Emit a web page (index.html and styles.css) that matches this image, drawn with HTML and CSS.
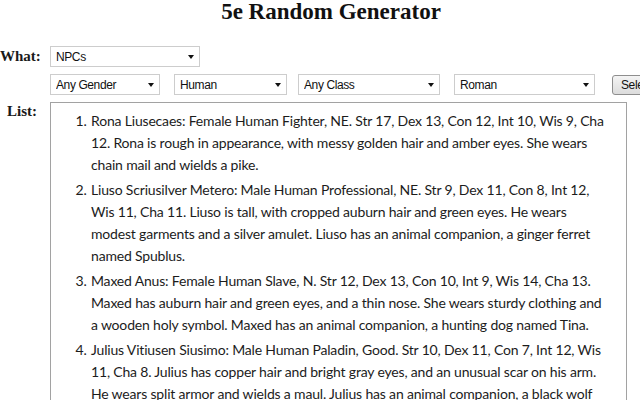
FILE: index.html
```html
<!DOCTYPE html>
<html lang="en">
<head>
    <meta charset="UTF-8">
    <title>5e Random Generator</title>
    <link rel="stylesheet" href="styles.css">
</head>
<body>
    <div class="page">
        <h1>5e Random Generator</h1>

        <div class="form">
            <label class="field-label">What:</label>
            <div class="row">
                <div class="select-wrap wide">
                    <select id="what">
                        <option>NPCs</option>
                        <option>Taverns</option>
                        <option>Treasure</option>
                    </select>
                </div>
            </div>

            <span></span>
            <div class="row options">
                <div class="select-wrap gender">
                    <select id="gender">
                        <option>Any Gender</option>
                        <option>Female</option>
                        <option>Male</option>
                    </select>
                </div>
                <div class="select-wrap race">
                    <select id="race">
                        <option>Human</option>
                        <option>Elf</option>
                        <option>Dwarf</option>
                    </select>
                </div>
                <div class="select-wrap cls">
                    <select id="class">
                        <option>Any Class</option>
                        <option>Fighter</option>
                        <option>Paladin</option>
                    </select>
                </div>
                <div class="select-wrap names">
                    <select id="names">
                        <option>Roman</option>
                        <option>Celtic</option>
                        <option>Norse</option>
                    </select>
                </div>
                <button class="btn">Select</button>
            </div>

            <label class="field-label list-label">List:</label>
            <div class="list-box">
                <ol class="results">
                    <li>Rona Liusecaes: Female Human Fighter, NE. Str 17, Dex 13, Con 12, Int 10, Wis 9, Cha 12. Rona is rough in appearance, with messy golden hair and amber eyes. She wears chain mail and wields a pike.</li>
                    <li>Liuso Scriusilver Metero: Male Human Professional, NE. Str 9, Dex 11, Con 8, Int 12, Wis 11, Cha 11. Liuso is tall, with cropped auburn hair and green eyes. He wears modest garments and a silver amulet. Liuso has an animal companion, a ginger ferret named Spublus.</li>
                    <li>Maxed Anus: Female Human Slave, N. Str 12, Dex 13, Con 10, Int 9, Wis 14, Cha 13. Maxed has auburn hair and green eyes, and a thin nose. She wears sturdy clothing and a wooden holy symbol. Maxed has an animal companion, a hunting dog named Tina.</li>
                    <li>Julius Vitiusen Siusimo: Male Human Paladin, Good. Str 10, Dex 11, Con 7, Int 12, Wis 11, Cha 8. Julius has copper hair and bright gray eyes, and an unusual scar on his arm. He wears split armor and wields a maul. Julius has an animal companion, a black wolf named Ravon.</li>
                </ol>
            </div>
        </div>
    </div>
</body>
</html>
```

FILE: styles.css
```css
html, body {
    margin: 0;
    padding: 0;
    overflow: hidden;
    background: #fff;
}
.page {
    width: 662px;
    color: #1a1a1a;
}
h1 {
    margin: 0;
    height: 46px;
    line-height: 24px;
    text-align: center;
    font-family: "Liberation Serif", serif;
    font-size: 23px;
    font-weight: bold;
    color: #111;
}
.form {
    display: grid;
    grid-template-columns: 50px 1fr;
    row-gap: 7px;
}
.field-label {
    font-family: "Liberation Serif", serif;
    font-weight: bold;
    font-size: 15px;
    line-height: 21px;
    text-align: right;
    padding-right: 13px;
    white-space: nowrap;
}
.list-label {
    line-height: 18px;
}
.row {
    display: flex;
    align-items: center;
    height: 21px;
}
.select-wrap {
    position: relative;
    height: 21px;
}
.select-wrap select {
    -webkit-appearance: none;
    appearance: none;
    width: 100%;
    height: 21px;
    margin: 0;
    padding: 0 18px 0 5px;
    border: 1px solid #cdcdcd;
    border-radius: 0;
    background: #fff;
    font-family: "Liberation Sans", sans-serif;
    font-size: 12px;
    letter-spacing: -0.4px;
    color: #111;
}
/* small dropdown arrow drawn over the native select */
.select-wrap::after {
    content: "";
    position: absolute;
    right: 6px;
    top: 9px;
    border-left: 3px solid transparent;
    border-right: 3px solid transparent;
    border-top: 4px solid #111;
    pointer-events: none;
}
.wide { width: 150px; }
.gender { width: 110px; }
.race { width: 113px; margin-left: 14px; }
.cls { width: 142px; margin-left: 11px; }
.names { width: 141px; margin-left: 14px; }
.btn {
    height: 20px;
    margin-left: 17px;
    padding: 0 8px;
    border: 1px solid #8e8e8e;
    border-radius: 3px;
    background: linear-gradient(#f4f4f4, #dcdcdc);
    font-family: "Liberation Sans", sans-serif;
    font-size: 12px;
    letter-spacing: -0.4px;
    color: #111;
}
.list-box {
    width: 577px;
    height: 310px;
    border: 1px solid #a2a2a2;
    box-sizing: border-box;
}
.results {
    margin: 0;
    padding: 7px 18px 0 39px;
    font-family: Lato, sans-serif;
    font-size: 14px;
    letter-spacing: -0.18px;
    line-height: 22px;
    color: #1c1c1c;
}
.results li {
    margin-bottom: 3px;
    padding-left: 1px;
}
```
